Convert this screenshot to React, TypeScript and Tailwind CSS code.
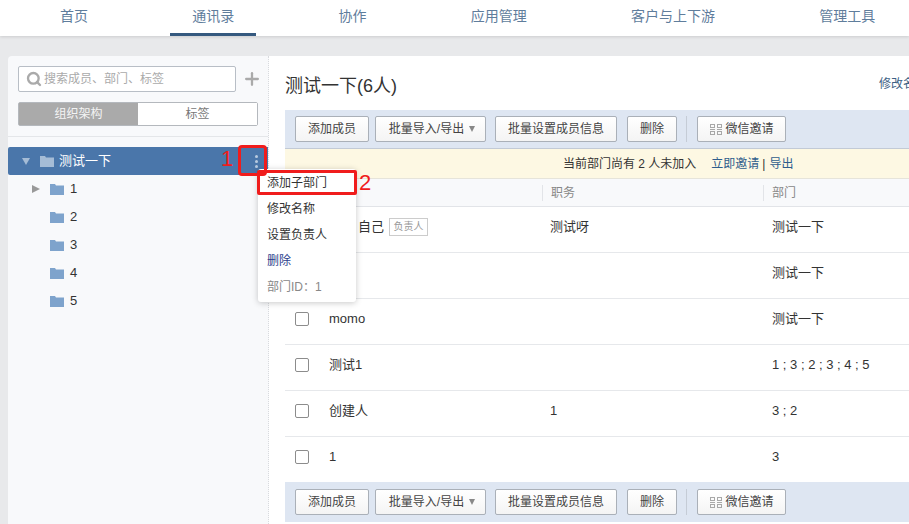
import { Search, Plus } from "lucide-react";

const FONT = "font-['Liberation_Sans','Noto_Sans_CJK_SC',sans-serif]";

const TABS = ["首页", "通讯录", "协作", "应用管理", "客户与上下游", "管理工具"];
const FOLDERS = ["1", "2", "3", "4", "5"];
const MENU = ["添加子部门", "修改名称", "设置负责人", "删除"];

const MEMBERS = [
  { name: "", title: "测试呀", dept: "测试一下", self: true },
  { name: "", title: "", dept: "测试一下" },
  { name: "momo", title: "", dept: "测试一下" },
  { name: "测试1", title: "", dept: "1 ; 3 ; 2 ; 3 ; 4 ; 5" },
  { name: "创建人", title: "1", dept: "3 ; 2" },
  { name: "1", title: "", dept: "3" },
];

function Folder({ className }: { className: string }) {
  return (
    <svg viewBox="0 0 14 12" className={className} fill="currentColor">
      <path d="M0 1h5l1 1.5h8V12H0z" />
    </svg>
  );
}

function GridIcon() {
  return (
    <svg viewBox="0 0 12 11" className="w-3 h-[11px] ml-px text-[#a8a8a8]" fill="none" stroke="currentColor">
      <rect x="0.5" y="0.5" width="4" height="3" />
      <rect x="7.5" y="0.5" width="4" height="3" />
      <path d="M0 5.5h5M7 5.5h5" />
      <rect x="0.5" y="7.5" width="4" height="3" />
      <rect x="7.5" y="7.5" width="4" height="3" />
    </svg>
  );
}

function Btn({ children, className }: { children: React.ReactNode; className: string }) {
  return (
    <button
      className={`h-[26px] flex items-center justify-center border border-[#aab0b8] rounded-[2px] bg-gradient-to-b from-white to-[#f4f4f4] text-xs text-[#444] ${className}`}
    >
      {children}
    </button>
  );
}

function Toolbar({ className }: { className: string }) {
  return (
    <div className={`flex items-center pl-[10px] bg-[#dee6f2] ${className}`}>
      <Btn className="w-[74px]">添加成员</Btn>
      <Btn className="w-[111px] ml-[6px] pl-[3px] gap-[5px]">
        批量导入/导出
        <span className="w-0 h-0 border-x-[3.5px] border-x-transparent border-t-[6px] border-t-[#888]" />
      </Btn>
      <Btn className="w-[122px] ml-[9px]">批量设置成员信息</Btn>
      <Btn className="w-[50px] ml-[10px]">删除</Btn>
      <div className="w-px h-[26px] bg-[#c5ccd6] ml-[9px]" />
      <Btn className="w-[89px] ml-[10px] gap-[3px]">
        <GridIcon />
        微信邀请
      </Btn>
    </div>
  );
}

function Sidebar() {
  return (
    <aside className="w-[261px] shrink-0 bg-[#f8f9fb] border-r border-dotted border-[#d8dade] rounded-tl-[4px]">
      <div className="px-[10px] pt-[10px] h-[81px] border-b border-[#e4e6e9]">
        <div className="flex items-center">
          <div className="w-[218px] h-[26px] shrink-0 flex items-center gap-[2px] pl-[7px] bg-white border border-[#b8bec6] rounded-[2px] text-xs text-[#aaa]">
            <Search size={16} strokeWidth={3.5} className="text-[#aaa]" />
            搜索成员、部门、标签
          </div>
          <Plus size={20} strokeWidth={2.75} className="ml-[6px] shrink-0 text-[#aaa]" />
        </div>
        <div className="flex w-[240px] h-6 mt-[10px] border border-[#b4b8bd] rounded-[2px] text-xs">
          <div className="w-[119px] flex items-center justify-center bg-[#aaa] text-[#f4f4f4]">组织架构</div>
          <div className="flex-1 flex items-center justify-center bg-white text-[#777]">标签</div>
        </div>
      </div>
      <div className="mt-[10px] h-7 flex items-center pl-[14px] bg-[#4a76aa] rounded-l-[2px] text-[13px] text-white">
        <span className="w-0 h-0 border-x-[4px] border-x-transparent border-t-[7px] border-t-[#a5bcd6]" />
        <Folder className="w-[14px] h-3 ml-[10px] text-[#a5bcd6]" />
        <span className="ml-[5px]">测试一下</span>
        <span className="ml-auto mr-[10px] flex flex-col gap-[2px]">
          <i className="w-[3px] h-[3px] rounded-full bg-[#b9cbe0]" />
          <i className="w-[3px] h-[3px] rounded-full bg-[#b9cbe0]" />
          <i className="w-[3px] h-[3px] rounded-full bg-[#b9cbe0]" />
        </span>
      </div>
      {FOLDERS.map((f, i) => (
        <div key={f} className="h-7 flex items-center pl-[24px] text-[13px] text-[#333]">
          <span
            className={`w-0 h-0 border-y-[4px] border-y-transparent border-l-[8px] ${i === 0 ? "border-l-[#999]" : "border-l-transparent"}`}
          />
          <Folder className="w-[14px] h-3 ml-[10px] text-[#7ea3cc]" />
          <span className="ml-[6px]">{f}</span>
        </div>
      ))}
    </aside>
  );
}

function MemberRow({ m, last }: { m: (typeof MEMBERS)[number]; last: boolean }) {
  return (
    <div className={`flex items-center pb-[6px] text-[13px] text-[#333] ${last ? "h-[45px]" : "h-[46px] border-b border-[#e6e8eb]"}`}>
      <div className="w-[257px] flex items-center pl-[10px]">
        <span className="w-[14px] h-[14px] border border-[#8c8c8c] rounded-[2px]" />
        <span className="ml-5">{m.name}</span>
        {m.self && (
          <>
            <span className="ml-[29px]">自己</span>
            <span className="ml-[5px] w-[39px] h-[18px] flex items-center justify-center border border-[#ccc] text-[10px] text-[#999]">负责人</span>
          </>
        )}
      </div>
      <div className="w-[221px] pl-[8px]">{m.title}</div>
      <div className="pl-[9px]">{m.dept}</div>
    </div>
  );
}

export default function App() {
  return (
    <div className={`relative w-[909px] h-[524px] overflow-hidden bg-[#e8e9eb] ${FONT}`}>
      <nav className="h-9 bg-white flex pl-[38px] gap-[60.25px] shadow-[0_1px_3px_rgba(0,0,0,0.12)] text-sm text-[#5f7d9c]">
        {TABS.map((t, i) => (
          <div
            key={t}
            className={`px-[22px] h-9 flex items-center ${i === 1 ? "border-b-[3px] border-[#35597f] pb-px" : "pb-[4px]"}`}
          >
            {t}
          </div>
        ))}
      </nav>

      <div className="flex h-[468px] mt-5 ml-2">
        <Sidebar />
        <main className="flex-1 min-w-0 bg-white pl-[16px] overflow-hidden">
          <div className="h-[54px] flex items-center justify-between w-[646px] pt-[5px]">
            <h1 className="text-lg text-[#333]">测试一下(6人)</h1>
            <span className="text-xs text-[#3d5f85] pb-[3px] w-[52px]">修改名称</span>
          </div>
          <Toolbar className="h-[39px] border-b border-[#c2cad6]" />
          <div className="h-[30px] flex items-center pl-[278px] bg-[#fdf8e3] border-b border-[#e6e4da] text-xs text-[#333]">
            当前部门尚有 2 人未加入
            <span className="ml-[15px] text-[#2f5d8c]">立即邀请</span>
            <span className="ml-[3px] mr-[4px]">|</span>
            <span className="text-[#2f5d8c]">导出</span>
          </div>
          <div className="h-[28px] flex items-center bg-[#f8f9fb] border-b border-[#e2e4e8] text-xs text-[#888]">
            <div className="w-[257px]" />
            <div className="w-[221px] pl-[8px] border-l border-[#e2e4e8]">职务</div>
            <div className="pl-[8px] border-l border-[#e2e4e8]">部门</div>
          </div>
          {MEMBERS.map((m, i) => (
            <MemberRow key={i} m={m} last={i === MEMBERS.length - 1} />
          ))}
          <Toolbar className="h-10" />
        </main>
      </div>

      {/* popup menu */}
      <div className="absolute left-[258px] top-[169px] w-[98px] h-[133px] bg-white rounded-[3px] shadow-[0_1px_6px_rgba(0,0,0,0.22)] pt-[1px] pl-[9px] text-xs text-[#333]">
        {MENU.map((m, i) => (
          <div key={m} className={`h-[26px] flex items-center ${i === 3 ? "text-[#2c3e8c]" : ""}`}>
            {m}
          </div>
        ))}
        <div className="h-[26px] flex items-center text-[#888]">部门ID：1</div>
      </div>

      {/* red annotations */}
      <div className="absolute left-[238px] top-[145px] w-[29px] h-[31px] border-[3px] border-[#f01c1c] rounded-[4px]" />
      <div className="absolute left-[257px] top-[170px] w-[100px] h-[25px] border-[3px] border-[#f01c1c] rounded-[2px]" />
      <span className="absolute left-[221px] top-[147px] text-[22px] leading-6 text-[#f01c1c]">1</span>
      <span className="absolute left-[359px] top-[171px] text-[22px] leading-6 text-[#f01c1c]">2</span>
    </div>
  );
}
